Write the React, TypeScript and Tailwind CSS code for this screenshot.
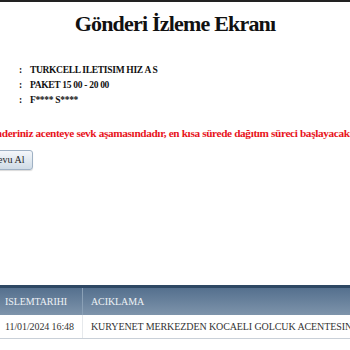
import React from 'react';

const rows = [
  { tarih: '11/01/2024 16:48', aciklama: 'KURYENET MERKEZDEN KOCAELI GOLCUK ACENTESINE SEVK EDILDI' },
];

export default function App() {
  return (
    <div className="h-[350px] w-[350px] overflow-hidden bg-white font-['Liberation_Serif',serif] text-[#111]">
      {/* üst çizgi */}
      <div className="h-[2px] bg-[#222]" />

      <h1 className="mt-[7px] text-center text-[22px] font-bold leading-[30px] tracking-[-0.8px]">Gönderi İzleme Ekranı</h1>

      {/* Gönderi bilgileri */}
      <div className="mt-[25px] flex flex-col gap-[3px] pl-[19px] text-[9.5px] font-bold leading-[12px] tracking-[-0.3px]">
        <div className="flex gap-[8px]"><span>:</span><span>TURKCELL ILETISIM HIZ A S</span></div>
        <div className="flex gap-[8px]"><span>:</span><span>PAKET 15 00 - 20 00</span></div>
        <div className="flex gap-[8px]"><span>:</span><span>F**** S****</span></div>
      </div>

      {/* Durum mesajı */}
      <div className="mt-[20px] flex justify-center whitespace-nowrap">
        <span className="pr-[6px] text-[11.25px] font-bold leading-[14px] tracking-[-0.35px] text-[#e8141c]">
          Gönderiniz acenteye sevk aşamasındadır, en kısa sürede dağıtım süreci başlayacaktır.
        </span>
      </div>

      <div className="mt-[10px] flex">
        <button className="-ml-[31px] h-[20px] rounded-[3px] border border-[#9fb1c4] bg-gradient-to-b from-[#f4f7fa] to-[#cfdbe6] px-[7px] text-[10px] leading-[18px] text-[#222] shadow-[0_1px_1px_rgba(0,0,0,0.15)]">
          Randevu Al
        </button>
      </div>

      {/* Hareketler tablosu */}
      <div className="mt-[115px] w-[600px]">
        <div className="h-[3px] bg-[#2e4864]" />
        <div className="flex h-[27px] bg-gradient-to-b from-[#55708e] to-[#7e94ab] text-[10px] leading-[27px] tracking-[-0.1px] text-[#eef2f6]">
          <div className="w-[83px] border-r border-[#8aa0b6] pl-[5px]">ISLEMTARIHI</div>
          <div className="pl-[8px]">ACIKLAMA</div>
        </div>
        {rows.map((r) => (
          <div key={r.tarih} className="flex h-[24px] border-b border-[#c9d0d8] text-[10px] leading-[24px] tracking-[-0.1px] text-[#333]">
            <div className="w-[83px] border-r border-[#e6e9ec] pl-[5px]">{r.tarih}</div>
            <div className="whitespace-nowrap pl-[8px]">{r.aciklama}</div>
          </div>
        ))}
      </div>
    </div>
  );
}
